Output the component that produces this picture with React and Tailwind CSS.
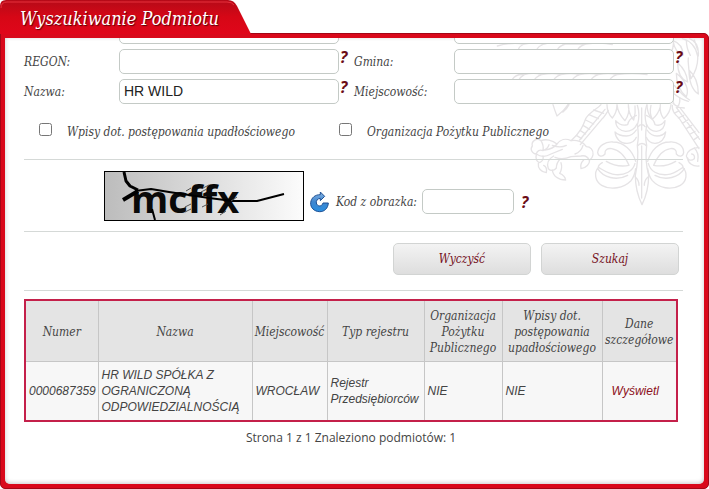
import { useState } from "react";

const columns = [
  { label: "Numer", width: "w-[73px]" },
  { label: "Nazwa", width: "" },
  { label: "Miejscowość", width: "w-[75px]" },
  { label: "Typ rejestru", width: "w-[97px]" },
  { label: "Organizacja Pożytku Publicznego", width: "w-[78px]" },
  { label: "Wpisy dot. postępowania upadłościowego", width: "w-[100px]" },
  { label: "Dane szczegółowe", width: "w-[75px]" },
];

const results = [
  {
    numer: "0000687359",
    nazwa: "HR WILD SPÓŁKA Z OGRANICZONĄ ODPOWIEDZIALNOŚCIĄ",
    miejscowosc: "WROCŁAW",
    rejestr: "Rejestr Przedsiębiorców",
    opp: "NIE",
    upadlosc: "NIE",
  },
];

const inputClass =
  "h-[25px] w-full min-w-0 rounded-[5px] border border-[#c4cac6] bg-white px-1 pb-0.5 font-['Liberation_Sans',sans-serif] text-sm text-[#222] not-italic outline-none focus:border-[#8a8f8c]";

const cellClass = "border border-[#c6c6c6] px-[3px]";

function Help({ className = "" }) {
  return (
    <button
      type="button"
      className={`h-4 cursor-pointer pl-px text-left font-['Open_Sans',sans-serif] text-base leading-4 font-bold text-[#6b0c16] italic ${className}`}
    >
      ?
    </button>
  );
}

function Field({ id, label, value, onChange, last }) {
  return (
    <>
      <label htmlFor={id} className="self-center">
        {label}
      </label>
      <input id={id} className={inputClass} value={value} onChange={(e) => onChange(id, e.target.value)} />
      <Help className={last ? "-mr-2" : ""} />
    </>
  );
}

function Eagle() {
  return (
    <svg
      viewBox="0 54 705 516"
      className="pointer-events-none absolute top-0 right-0 h-[172px] w-[235px]"
      fill="none"
      stroke="#e5e3e5"
      strokeWidth="4"
      strokeLinejoin="round"
      strokeLinecap="round"
      aria-hidden="true"
    >
      {/* left wing */}
      <path d="M85 78c20-6 50-10 80-6-8 4-14 8-16 14M165 72c20-4 40-4 60 0-10 4-16 8-20 14M225 72c20-6 44-6 64 0-12 4-18 8-22 14M290 72h60c-12 4-18 8-22 14M350 72c30-4 60-4 80 2" />
      <path d="M130 178c8-12 22-16 36-14-10 6-14 10-16 16M166 164c20-6 40-4 52 0-12 4-18 8-22 16M218 164c20-4 44-4 58 0-12 4-18 8-22 16M276 164c20-4 40-4 56 0-12 4-18 8-22 16M332 164c20-4 40-4 56 0-12 4-18 8-22 16M388 164c20-4 40-4 56 0-12 4-18 8-22 16M444 164c30-4 60-4 90 0" />
      <path d="M252 254c4 14 8 24 12 34 14-10 24-20 34-36M300 254c-4 8-10 16-18 22" />
      {/* right wing */}
      <path d="M612 56c4 18 0 32-8 46M612 62c18 6 30 20 30 44-16-6-26-18-30-44zM640 56c22 6 40 22 46 52 2 28-8 50-20 68-6-20-10-40-8-62M652 60c0 18 4 32 12 46M662 56c20 8 28 26 26 52M626 128c18 16 28 34 30 58-18-8-30-28-30-58zM660 150c18 16 28 40 28 72-18-12-28-36-28-72zM622 160c0 30 8 52 30 70 8-18 2-44-30-70M616 196c14 18 26 32 46 44M616 222c12 10 26 18 42 22M676 60l10 30" />
      <path d="M616 214c-6 18-6 30 0 40M632 234c2 12-2 22-8 30M612 250c10 10 22 14 34 14" />
      {/* belly feathers */}
      <path d="M414 254c0 18 6 30 16 40 8-10 14-24 14-40M444 254c2 20 10 34 24 48 10-14 14-30 10-48M478 260c2 16 6 30 16 40 4-12 6-26 4-42M606 254c-2 18-10 32-22 42-8-10-12-24-10-42M574 260c-4 16-12 28-24 38-6-12-8-26-4-42M534 254c0 14 4 28 12 40" />
      {/* left leg */}
      <path d="M396 254c-10 12-34 22-46 42-8 22-16 42-44 66M418 272c-8 10-12 20-20 26l-64 76M408 268l-76 92" />
      <path d="M374 270l30 10M360 284l28 12M350 300l24 12M342 316l20 12M334 332l16 10M322 346l16 10" />
      {/* left talons */}
      <path d="M306 362c-16-8-32-4-42 10-14-12-34-16-48-10-14-10-30 2-26 16-8 10 0 24 12 24 2-10 10-14 20-10 10-4 16-10 18-18M216 362c6 10 8 20 6 30M264 372c-8 10-20 16-36 18M202 402c14 10 30 8 44 0l34-14M250 376c16 6 30 6 42 0M306 362c16-4 38 4 46 18 12 0 22 10 20 24-2 10-6 14-12 16-4-10-14-14-24-12l-30 2c-18 8-34 8-48 2M342 376c-4 14-12 22-24 26M362 420c0 12-10 24-26 26-2-8 0-18 8-26" />
      <path d="M202 404c-4 12 2 22 10 24 8-4 12-12 10-20M208 430c-2 14 8 26 24 28 2-10 0-18-8-22M254 408c-14 8-22 22-16 38 8 8 18 6 24-2 0-12 4-20 12-28M250 450c2 18 18 30 40 30-2-12-8-16-18-20 6-10 8-20 4-32" />
      {/* right leg and talons */}
      <path d="M610 256c-2 14 8 28 20 38l60 92M632 262l58 76M622 262l70 96M616 280l14-8M628 294l16-8M640 310l16-10M652 326l16-10M664 342l14-8M676 358l12-8" />
      <path d="M690 382c-18 2-36 8-38 26 2 12 14 16 24 8 2-8-2-14-8-14M676 384c10 10 14 22 10 40M656 414c0 14 14 26 34 24" />
      {/* tail stem */}
      <path d="M505 256c6 18 6 40 0 60 4 20 4 40 0 60 4 30 0 60-6 90 0 32 8 64 20 88 12-24 20-56 20-88-8-30-10-60-6-90-4-20-4-40 0-60-6-20-6-42 0-60M518 264v66M518 378v156M508 320c4-8 16-8 20 0M506 378c6-10 20-10 26 0M498 470c8 6 12 14 12 26M538 470c-8 6-12 14-12 26" />
      {/* tail, left half */}
      <path d="M502 286c-14 6-24 16-26 28-14 4-26 0-36-12 0 18 12 30 30 32 16 0 28-8 34-22M502 330c-8 12-18 18-30 18-14 0-26-4-34-12 2 20 16 34 36 34 14 0 24-8 28-18" />
      <path d="M500 424c-10-34-36-58-68-58-24-2-44 12-46 32 2 12 14 14 22 4-2-12 8-18 20-16 26 4 42 26 52 50-20 4-44 2-68-12" />
      <path d="M498 430c-6 24-30 36-58 34-22-2-38-14-52-22-14 16-10 42 10 54 28 16 66 8 88-14 8-10 12-22 14-36M386 446c16 26 56 38 90 20M400 428c-8 4-12 8-12 14" />
      {/* tail, right half */}
      <path d="M532 286c14 6 24 16 26 28 10 4 22 0 30-12 0 18-10 30-26 32-14 0-24-8-30-22M534 330c8 12 18 18 30 18 12 0 20-4 26-12-2 20-14 34-32 34-12 0-22-8-26-18" />
      <path d="M536 424c10-34 34-58 66-58 24-2 42 12 42 32-2 12-14 14-22 4 2-12-8-18-18-16-26 4-40 26-50 50 20 4 42 2 66-12" />
      <path d="M538 430c6 24 28 36 56 34 22-2 36-14 48-22 14 16 12 42-8 54-28 16-64 8-84-14-8-10-12-22-14-36M646 446c-16 26-56 38-88 20M630 428c8 4 12 8 12 14" />
    </svg>
  );
}

function Captcha() {
  return (
    <svg
      viewBox="0 0 200 50"
      className="h-[50px] w-[200px] shrink-0"
      role="img"
      aria-label="Kod z obrazka"
    >
      <defs>
        <linearGradient id="captcha-bg">
          <stop offset="0" stopColor="#bcbcbc" />
          <stop offset="1" stopColor="#fcfcfc" />
        </linearGradient>
      </defs>
      <rect x="0.5" y="0.5" width="199" height="49" fill="url(#captcha-bg)" stroke="#000" />
      <text
        x="27"
        y="42"
        className="font-['Open_Sans',sans-serif] text-[38px] font-bold not-italic"
        fill="#0a0a0a"
      >
        mcffx
      </text>
      <g fill="none" stroke="#000" strokeLinejoin="round">
        <path d="M20 1l2 9 4 5 8 4" strokeWidth="3" />
        <path d="M31 20l16-2 18 3 40 6 24 3h24l27-7" strokeWidth="2" />
        <path d="M19 29l15-9" strokeWidth="4" />
        <path d="M48 38l3 11" strokeWidth="2" />
        {/* frayed edges of the last letters */}
        <path d="M82 20l5-3M81 36l6-3M81 41l6-3M99 17l6-3M97 21l6-3M98 36l6-3M116 44l6-4M127 30l6-4" stroke="#555" strokeWidth="1" />
      </g>
    </svg>
  );
}

function RefreshIcon() {
  return (
    <svg viewBox="0 0 57 66" className="h-[22px] w-[19px]" aria-hidden="true">
      <defs>
        <linearGradient id="refresh-fill" x1="0" y1="0" x2="0" y2="1">
          <stop offset="0" stopColor="#86b4e4" />
          <stop offset="0.5" stopColor="#3f86cf" />
          <stop offset="1" stopColor="#2a8ee0" />
        </linearGradient>
      </defs>
      <path
        d="M31 3l13 13-13 13v-7c-9 1-13 7-12 14 2 11 17 12 20 0h16c-1 16-12 27-27 26C12 61 1 50 2 35 4 20 15 11 31 11z"
        fill="url(#refresh-fill)"
        stroke="#1d4f93"
        strokeWidth="3"
        strokeLinejoin="round"
      />
    </svg>
  );
}

function FormButton({ children, ...props }) {
  return (
    <button
      className="h-8 w-[138px] cursor-pointer rounded-[5px] border border-[#d2d4d3] bg-linear-to-b from-[#f3f3f3] to-[#dedede] text-[#75101c] italic"
      {...props}
    >
      {children}
    </button>
  );
}

export default function App() {
  const [values, setValues] = useState({ nazwa: "HR WILD" });

  const update = (id, value) => setValues((prev) => ({ ...prev, [id]: value }));
  const field = (id, label, last) => (
    <Field id={id} label={label} value={values[id] || ""} onChange={update} last={last} />
  );

  const handleSubmit = (e) => {
    e.preventDefault();
  };

  return (
    <div className="flex min-h-screen flex-col bg-white font-['DejaVu_Serif_Condensed','DejaVu_Serif',serif] text-xs text-[#444]">
      {/* Tab */}
      <header className="relative flex h-[33px] w-[252px] items-center pl-5">
        <svg viewBox="0 0 252 34" className="absolute top-0 left-0 h-[34px] w-[252px]" aria-hidden="true">
          <defs>
            <linearGradient id="tab-fill" x1="0" y1="0" x2="0" y2="1">
              <stop offset="0" stopColor="#b50a18" />
              <stop offset="0.5" stopColor="#d60716" />
              <stop offset="1" stopColor="#e0061a" />
            </linearGradient>
          </defs>
          <path d="M0 34V6q0-6 6-6h222q6 0 9 6l14 28z" fill="url(#tab-fill)" />
          <path d="M1 8q0-6 6-6h220q5 0 7 3" fill="none" stroke="#e8303c" strokeWidth="1" />
        </svg>
        <h1 className="relative pt-1 text-lg leading-6 whitespace-nowrap text-white italic [text-shadow:1px_1px_1px_#5c0008]">
          Wyszukiwanie Podmiotu
        </h1>
      </header>

      {/* Panel */}
      <main className="flex flex-1 flex-col rounded-[5px] rounded-tl-none border border-[#a30716] bg-[#d9091b] p-1">
        <div className="relative flex-1 overflow-hidden rounded-b-[5px] bg-white pr-[21px] pl-[19px] shadow-[inset_0_-1px_4px_#c9c9c9]">
          <Eagle />
          <form onSubmit={handleSubmit} className="relative italic">
            <div className="-mt-[19px] grid grid-cols-[95px_1fr_15px_100px_1fr_9px] gap-y-[5px]">
              {/* row scrolled under the panel edge */}
              <input
                aria-label="NIP"
                className={`col-start-2 ${inputClass}`}
                value={values.nip || ""}
                onChange={(e) => update("nip", e.target.value)}
              />
              <input
                aria-label="Powiat"
                className={`col-start-5 ${inputClass}`}
                value={values.powiat || ""}
                onChange={(e) => update("powiat", e.target.value)}
              />
              <span />
              {field("regon", "REGON:")}
              {field("gmina", "Gmina:", true)}
              {field("nazwa", "Nazwa:")}
              {field("miejscowosc", "Miejscowość:", true)}
            </div>

            <div className="flex h-[55px] items-center gap-11 pl-[15px]">
              <label className="flex items-center gap-[15px]">
                <input type="checkbox" className="mb-1 size-[13px]" />
                Wpisy dot. postępowania upadłościowego
              </label>
              <label className="flex items-center gap-[15px]">
                <input type="checkbox" className="mb-1 size-[13px]" />
                Organizacja Pożytku Publicznego
              </label>
            </div>

            <div className="flex h-[72px] items-center border-t border-[#d5d9d7] pl-20">
              <Captcha />
              <button type="button" aria-label="Odśwież obrazek" className="mt-3 ml-[6px] cursor-pointer">
                <RefreshIcon />
              </button>
              <label htmlFor="kod" className="mt-3 ml-[7px] whitespace-nowrap">
                Kod z obrazka:
              </label>
              <div className="mt-3 ml-[5px] w-[92px]">
                <input
                  id="kod"
                  className={`block ${inputClass}`}
                  value={values.kod || ""}
                  onChange={(e) => update("kod", e.target.value)}
                />
              </div>
              <Help className="mt-3 ml-[6px]" />
            </div>

            <div className="flex h-[59px] items-center justify-end gap-[10px] border-t border-[#d5d9d7] pr-1 pb-1">
              <FormButton type="button" onClick={() => setValues({})}>
                Wyczyść
              </FormButton>
              <FormButton type="submit">Szukaj</FormButton>
            </div>
          </form>

          <section className="border-t border-[#d5d9d7] pt-2 pr-[5px]">
            <table className="w-full table-fixed border-collapse border-2 border-[#c4204a] italic">
              <thead>
                <tr className="h-[61px] bg-[#e4e4e4]">
                  {columns.map((col) => (
                    <th
                      key={col.label}
                      className={`border border-[#c6c6c6] px-0 pt-0.5 text-center leading-4 font-normal ${col.width}`}
                    >
                      {col.label}
                    </th>
                  ))}
                </tr>
              </thead>
              <tbody className="font-['Liberation_Sans',sans-serif] leading-4">
                {results.map((row) => (
                  <tr key={row.numer} className="h-[60px] bg-[#f7f7f7]">
                    <td className={cellClass}>{row.numer}</td>
                    <td className={cellClass}>{row.nazwa}</td>
                    <td className={cellClass}>{row.miejscowosc}</td>
                    <td className={cellClass}>{row.rejestr}</td>
                    <td className={cellClass}>{row.opp}</td>
                    <td className={cellClass}>{row.upadlosc}</td>
                    <td className="border border-[#c6c6c6] pr-2 text-center">
                      <a href="#szczegoly" className="text-[#8c1020]">
                        Wyświetl
                      </a>
                    </td>
                  </tr>
                ))}
              </tbody>
            </table>
            <p className="pt-2 text-center font-['Open_Sans',sans-serif] leading-4">
              Strona 1 z 1 Znaleziono podmiotów: 1
            </p>
          </section>
        </div>
      </main>
    </div>
  );
}
